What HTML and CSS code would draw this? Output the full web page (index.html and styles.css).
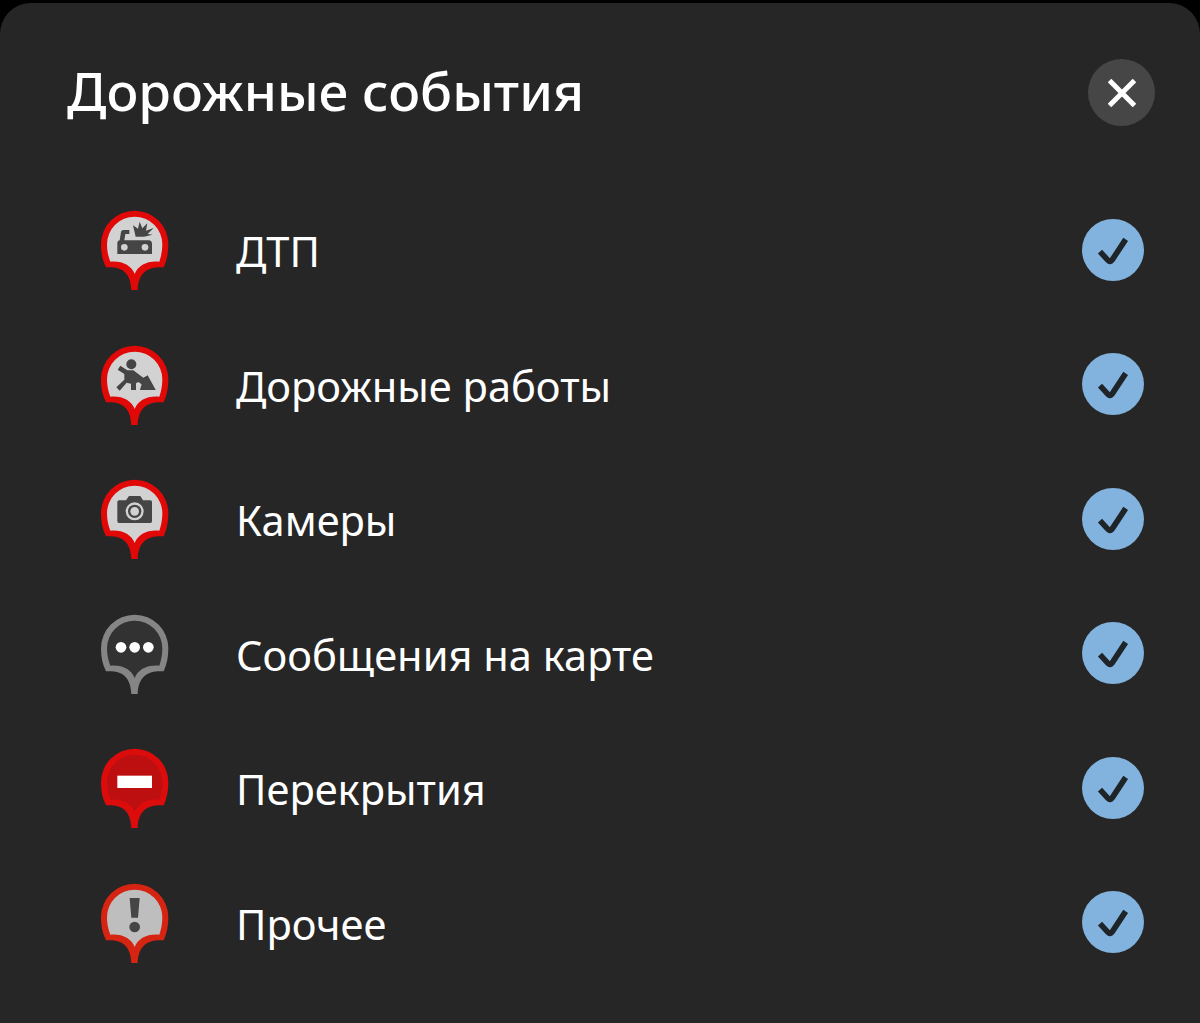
FILE: index.html
```html
<!DOCTYPE html>
<html lang="ru">
<head>
    <meta charset="UTF-8">
    <meta name="viewport" content="width=device-width, initial-scale=1.0">
    <title>Дорожные события</title>
    <link rel="stylesheet" href="styles.css">
</head>
<body>

<!-- shared shapes -->
<svg class="sprite" aria-hidden="true">
    <symbol id="pin" viewBox="0 0 270 300">
        <path class="pin-border" d="M48 202C37 180 33 158 33 133A101 101 0 0 1 235 133C235 158 231 180 221 202C180 199 145 212 143 270H124C122 212 89 199 48 202Z"/>
        <path class="pin-fill" d="M61 185C54 168 51 150 51 133A83 83 0 0 1 217 133C217 150 214 168 208 185C170 182 144 197 134 222C124 197 98 182 61 185Z"/>
    </symbol>
    <symbol id="check" viewBox="0 0 186 186">
        <path d="M54 98L78 124Q85 131 91 122L131 61" fill="none" stroke="#1e2428" stroke-width="17"/>
    </symbol>
</svg>

<div class="sheet">
    <div class="header">
        <h1 class="title">Дорожные события</h1>
        <button class="close" aria-label="Закрыть">
            <svg viewBox="0 0 28 28"><path d="M1.5 1.5L26.5 26.5M26.5 1.5L1.5 26.5" stroke="#fff" stroke-width="5"/></svg>
        </button>
    </div>

    <div class="list">
        <div class="row">
            <svg class="pin" viewBox="0 0 270 300">
                <use href="#pin"/>
                <path class="glyph" d="M82 129Q82 122 89 121L93 96Q94 90 100 90H118V102H106L103 121H178Q186 123 186 132V162H82Z"/>
                <path class="glyph" d="M137 110L129 76L144 86L149 65L157 85L172 70L168 92L191 84L173 102L188 104L162 110Z"/>
                <circle class="hole" cx="103" cy="142" r="10"/>
                <circle class="hole" cx="165" cy="142" r="10"/>
            </svg>
            <span class="label">ДТП</span>
            <span class="check"><svg><use href="#check"/></svg></span>
        </div>
        <div class="row">
            <svg class="pin" viewBox="0 0 270 300">
                <use href="#pin"/>
                <circle class="glyph" cx="124" cy="88" r="15"/>
                <path class="glyph" d="M91 92L112 106H130L160 128L172 122L196 165H150L158 150L145 141L138 145V165H123V146L110 143L89 167L79 157L103 134V117L83 104Z"/>
                <path class="glyph" d="M160 130L173 121L197 165H150Z"/>
            </svg>
            <span class="label">Дорожные работы</span>
            <span class="check"><svg><use href="#check"/></svg></span>
        </div>
        <div class="row">
            <svg class="pin pin-camera" viewBox="0 0 270 300">
                <use href="#pin"/>
                <path class="glyph" d="M82 99Q82 94 87 94H108L117 81H151L159 94H181Q186 94 186 99V157Q186 162 181 162H87Q82 162 82 157Z"/>
                <circle class="hole" cx="134" cy="127" r="27"/>
                <circle class="glyph" cx="134" cy="127" r="20"/>
                <circle class="hole" cx="134" cy="127" r="13"/>
            </svg>
            <span class="label">Камеры</span>
            <span class="check"><svg><use href="#check"/></svg></span>
        </div>
        <div class="row">
            <svg class="pin pin-gray" viewBox="0 0 270 300">
                <use href="#pin"/>
                <circle class="light" cx="93" cy="130" r="16"/>
                <circle class="light" cx="134" cy="130" r="16"/>
                <circle class="light" cx="175" cy="130" r="16"/>
            </svg>
            <span class="label">Сообщения на карте</span>
            <span class="check"><svg><use href="#check"/></svg></span>
        </div>
        <div class="row">
            <svg class="pin pin-closed" viewBox="0 0 270 300">
                <use href="#pin"/>
                <rect class="light" x="82" y="113" width="104" height="37"/>
            </svg>
            <span class="label">Перекрытия</span>
            <span class="check"><svg><use href="#check"/></svg></span>
        </div>
        <div class="row">
            <svg class="pin pin-other" viewBox="0 0 270 300">
                <use href="#pin"/>
                <path class="glyph" d="M119 75H149L144 134H124Z"/>
                <circle class="glyph" cx="134" cy="162" r="16"/>
            </svg>
            <span class="label">Прочее</span>
            <span class="check"><svg><use href="#check"/></svg></span>
        </div>
    </div>
</div>

</body>
</html>
```
FILE: styles.css
```css
* {
    box-sizing: border-box;
}
body {
    margin: 0;
    padding-top: 3px;
    height: 1023px;
    overflow: hidden;
    background-color: #000;
    color: #fff;
    font-family: "Noto Sans", "Open Sans", sans-serif;
}
.sprite {
    display: none;
}
.sheet {
    height: 1020px;
    background-color: #262626;
    border-radius: 31px 31px 0 0;
}
.header {
    display: flex;
    justify-content: space-between;
    align-items: center;
    height: 179px;
    padding: 0 45px 0 67px;
}
.title {
    margin: 0;
    padding-bottom: 4px;
    font-size: 53px;
    font-weight: 500;
    line-height: 72px;
    white-space: nowrap;
}
.close {
    display: flex;
    align-items: center;
    justify-content: center;
    width: 67px;
    height: 67px;
    padding: 0;
    border: none;
    border-radius: 50%;
    background-color: #464646;
}
.close svg {
    width: 28px;
    height: 28px;
}
.list {
    padding-top: 0.5px;
}
.row {
    display: flex;
    align-items: center;
    height: 134.5px;
    padding: 0 56px 0 90px;
}
.pin {
    width: 90px;
    height: 100px;
    margin-top: 1px;
    --border: #e10808;
    --fill: #d2d2d2;
}
.pin-camera {
    margin-top: 0;
}
.pin-gray {
    --border: #858585;
    --fill: #323232;
}
.pin-closed {
    --border: #dc0c0c;
    --fill: #be0f10;
}
.pin-other {
    --border: #d52412;
    --fill: #bebebe;
}
.pin-border {
    fill: var(--border);
}
.pin-fill,
.hole {
    fill: var(--fill);
}
.glyph {
    fill: #454545;
}
.light {
    fill: #fff;
}
.label {
    flex: 1;
    padding: 3px 0 0 56px;
    font-size: 41.6px;
    line-height: 56px;
    white-space: nowrap;
}
.check {
    width: 62px;
    height: 62px;
    border-radius: 50%;
    background-color: #82b3de;
}
.check svg {
    display: block;
    width: 62px;
    height: 62px;
}
```
